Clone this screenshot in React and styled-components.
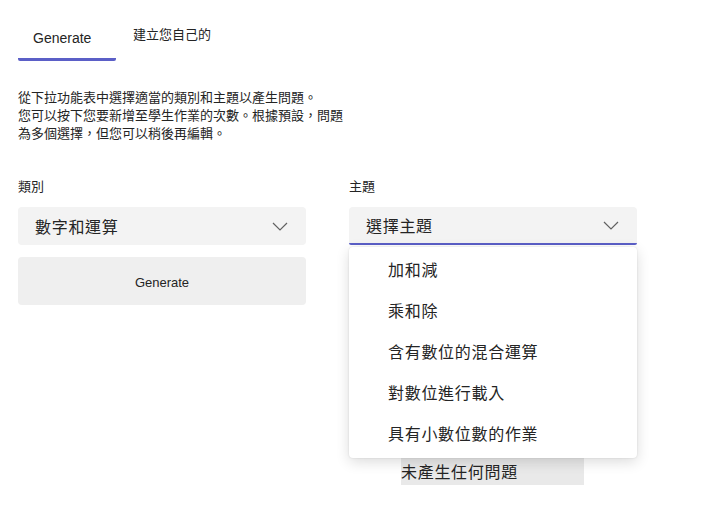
import React from 'react';
import styled, { createGlobalStyle } from 'styled-components';

const GlobalStyle = createGlobalStyle`
  body {
    margin: 0;
    background: #ffffff;
    color: #242424;
    font-family: "Liberation Sans", "Noto Sans CJK TC", sans-serif;
  }
`;

const CJK = `"Noto Sans CJK TC", "Liberation Sans", sans-serif`;

const topics = ['加和減', '乘和除', '含有數位的混合運算', '對數位進行載入', '具有小數位數的作業'];

function Chevron() {
  return (
    <svg width="16" height="9" viewBox="0 0 16 9" fill="none">
      <polyline points="1,1 8,8 15,1" stroke="#616161" strokeWidth="1.2" />
    </svg>
  );
}

export default function App() {
  return (
    <Page>
      <GlobalStyle />
      <Tabs>
        <Tab active>Generate</Tab>
        <Tab cjk>建立您自己的</Tab>
      </Tabs>
      <Intro>
        從下拉功能表中選擇適當的類別和主題以產生問題。
        <br />
        您可以按下您要新增至學生作業的次數。根據預設，問題
        <br />
        為多個選擇，但您可以稍後再編輯。
      </Intro>
      <Columns>
        <Column>
          <Label>類別</Label>
          <Select>
            <span>數字和運算</span>
            <Chevron />
          </Select>
          <GenerateButton>Generate</GenerateButton>
        </Column>
        <Column>
          <Label>主題</Label>
          <Select focused>
            <span>選擇主題</span>
            <Chevron />
          </Select>
          <Menu>
            {topics.map((t) => (
              <MenuItem key={t}>{t}</MenuItem>
            ))}
          </Menu>
          <Empty>未產生任何問題</Empty>
        </Column>
      </Columns>
    </Page>
  );
}

const Page = styled.div`
  width: 726px;
  height: 520px;
  padding-left: 18px;
  box-sizing: border-box;
  overflow: hidden;
`;

const Tabs = styled.div`
  display: flex;
  align-items: flex-start;
  gap: 17px;
`;

const Tab = styled.div`
  width: ${(p) => (p.active ? '98px' : 'auto')};
  box-sizing: border-box;
  padding-left: ${(p) => (p.active ? '15px' : '0')};
  font-family: ${(p) => (p.cjk ? CJK : '"Liberation Sans", sans-serif')};
  font-size: ${(p) => (p.cjk ? '13px' : '14px')};
  line-height: 16px;
  padding-top: ${(p) => (p.active ? '30px' : '26px')};
  padding-bottom: 12px;
  color: #242424;
  border-bottom: ${(p) => (p.active ? '3px solid #5b5fc7' : 'none')};
  border-radius: 2px;
`;

const Intro = styled.p`
  margin: 27px 0 0;
  font-family: ${CJK};
  font-size: 13px;
  line-height: 18px;
  color: #242424;
`;

const Columns = styled.div`
  display: flex;
  gap: 43px;
  margin-top: 35px;
`;

const Column = styled.div`
  position: relative;
  width: 288px;
  display: flex;
  flex-direction: column;
`;

const Label = styled.div`
  font-family: ${CJK};
  font-size: 13px;
  line-height: 18px;
  margin-bottom: 12px;
`;

const Select = styled.div`
  height: 38px;
  box-sizing: border-box;
  background: #f3f3f3;
  border-radius: 4px;
  display: flex;
  align-items: center;
  justify-content: space-between;
  padding: 0 18px 0 17px;
  font-family: ${CJK};
  font-size: 16px;
  letter-spacing: 0.7px;
  color: #242424;
  border-bottom: ${(p) => (p.focused ? '2px solid #5b5fc7' : 'none')};
  border-bottom-left-radius: ${(p) => (p.focused ? '2px' : '4px')};
  border-bottom-right-radius: ${(p) => (p.focused ? '2px' : '4px')};
`;

const GenerateButton = styled.div`
  margin-top: 12px;
  height: 48px;
  box-sizing: border-box;
  padding-top: 3px;
  border-radius: 4px;
  background: #efefef;
  display: flex;
  align-items: center;
  justify-content: center;
  font-size: 13px;
  color: #242424;
`;

const Menu = styled.div`
  position: absolute;
  top: 70px;
  left: 0;
  width: 288px;
  box-sizing: border-box;
  padding: 2px 0 5px;
  background: #ffffff;
  border-radius: 4px;
  box-shadow: 0 4px 14px rgba(0, 0, 0, 0.14), 0 0 2px rgba(0, 0, 0, 0.12);
  z-index: 2;
`;

const MenuItem = styled.div`
  height: 40.8px;
  display: flex;
  align-items: center;
  padding-left: 39px;
  font-family: ${CJK};
  font-size: 16px;
  letter-spacing: 0.7px;
  color: #242424;
`;

const Empty = styled.div`
  margin: 213px 0 0 52px;
  width: 183px;
  height: 27px;
  line-height: 27px;
  background: #e9e9e9;
  font-family: ${CJK};
  font-size: 16px;
  letter-spacing: 0.7px;
  color: #242424;
`;
